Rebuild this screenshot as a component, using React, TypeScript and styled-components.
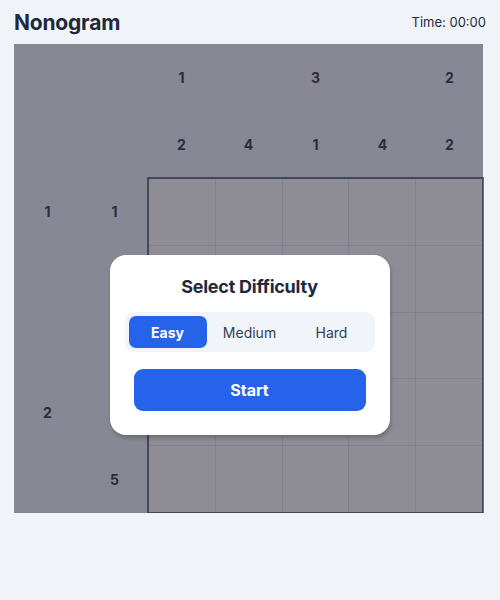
import React, { useState } from "react";
import styled, { createGlobalStyle } from "styled-components";

const GlobalStyle = createGlobalStyle`
  html, body { margin: 0; padding: 0; }
  body {
    background: #f0f4f8;
    font-family: Inter, "Noto Sans", "Liberation Sans", sans-serif;
    color: #1e293b;
  }
  * { box-sizing: border-box; }
`;

const Page = styled.div`
  padding: 8px 14px 0 14px;
`;

const Header = styled.header`
  display: flex;
  justify-content: space-between;
  align-items: center;
  height: 28px;
  margin-bottom: 8px;
`;

const Title = styled.h1`
  margin: 0;
  font-size: 21px;
  font-weight: 700;
  color: #1e293b;
  letter-spacing: -0.2px;
`;

const Timer = styled.div`
  font-size: 13px;
  color: #1e293b;
`;

const CELL = 67;

const Board = styled.div`
  position: relative;
  display: grid;
  grid-template-columns: ${CELL * 2}px repeat(5, ${CELL}px);
  grid-template-rows: ${CELL * 2}px repeat(5, ${CELL}px);
  width: ${CELL * 7}px;
  background: #f1f5f9;
`;

const ColClues = styled.div<{ $col: number }>`
  grid-row: 1;
  grid-column: ${(p) => p.$col};
  display: flex;
  flex-direction: column;
  justify-content: flex-end;
`;

const RowClues = styled.div<{ $row: number }>`
  grid-column: 1;
  grid-row: ${(p) => p.$row};
  display: flex;
  justify-content: flex-end;
`;

const Clue = styled.span`
  width: ${CELL}px;
  height: ${CELL}px;
  display: flex;
  align-items: center;
  justify-content: center;
  font-size: 14px;
  font-weight: 700;
  color: #334155;
`;

const CellGrid = styled.div`
  grid-column: 2 / 7;
  grid-row: 2 / 7;
  margin: -1px;
  border: 2px solid #64748b;
  display: grid;
  grid-template-columns: repeat(5, 1fr);
  grid-template-rows: repeat(5, 1fr);
  gap: 1px;
  background: #e2e8f0;
`;

const Cell = styled.div`
  background: #ffffff;
`;

const Overlay = styled.div`
  position: absolute;
  inset: 0;
  background: rgba(29, 27, 45, 0.5);
  display: flex;
  justify-content: center;
  align-items: flex-start;
  padding-top: 211px;
  padding-left: 2px;
`;

const Modal = styled.div`
  width: 280px;
  background: #ffffff;
  border-radius: 16px;
  padding: 20px 15px 24px 15px;
  box-shadow: 1px 3px 4px rgba(0, 0, 0, 0.22);
  display: flex;
  flex-direction: column;
`;

const ModalTitle = styled.h2`
  margin: 0 0 13px 0;
  font-size: 18px;
  line-height: 24px;
  font-weight: 700;
  letter-spacing: -0.25px;
  text-align: center;
  color: #1e293b;
`;

const Segment = styled.div`
  display: flex;
  gap: 4px;
  padding: 4px;
  background: #f1f5f9;
  border-radius: 9px;
`;

const SegButton = styled.button<{ $active: boolean }>`
  flex: 1;
  height: 32px;
  border: none;
  border-radius: 7px;
  font-family: inherit;
  font-size: 14px;
  font-weight: ${(p) => (p.$active ? 700 : 400)};
  color: ${(p) => (p.$active ? "#ffffff" : "#334155")};
  background: ${(p) => (p.$active ? "#2563eb" : "transparent")};
  cursor: pointer;
`;

const StartButton = styled.button`
  margin: 17px 9px 0 9px;
  height: 42px;
  border: none;
  border-radius: 9px;
  background: #2563eb;
  color: #ffffff;
  font-family: inherit;
  font-size: 16px;
  font-weight: 700;
  cursor: pointer;
`;

const colClues: number[][] = [[1, 2], [4], [3, 1], [4], [2, 2]];
const rowClues: number[][] = [[1, 1], [5], [3], [2, 2], [5]];

export default function App() {
  const [level, setLevel] = useState("Easy");
  return (
    <>
      <GlobalStyle />
      <Page>
        <Header>
          <Title>Nonogram</Title>
          <Timer>Time: 00:00</Timer>
        </Header>
        <Board>
          {colClues.map((c, i) => (
            <ColClues key={`c${i}`} $col={i + 2}>
              {c.map((n, j) => (
                <Clue key={j}>{n}</Clue>
              ))}
            </ColClues>
          ))}
          {rowClues.map((r, i) => (
            <RowClues key={`r${i}`} $row={i + 2}>
              {r.map((n, j) => (
                <Clue key={j}>{n}</Clue>
              ))}
            </RowClues>
          ))}
          <CellGrid>
            {Array.from({ length: 25 }).map((_, i) => (
              <Cell key={i} />
            ))}
          </CellGrid>
          <Overlay>
            <Modal>
              <ModalTitle>Select Difficulty</ModalTitle>
              <Segment>
                {["Easy", "Medium", "Hard"].map((l) => (
                  <SegButton key={l} $active={l === level} onClick={() => setLevel(l)}>
                    {l}
                  </SegButton>
                ))}
              </Segment>
              <StartButton>Start</StartButton>
            </Modal>
          </Overlay>
        </Board>
      </Page>
    </>
  );
}
